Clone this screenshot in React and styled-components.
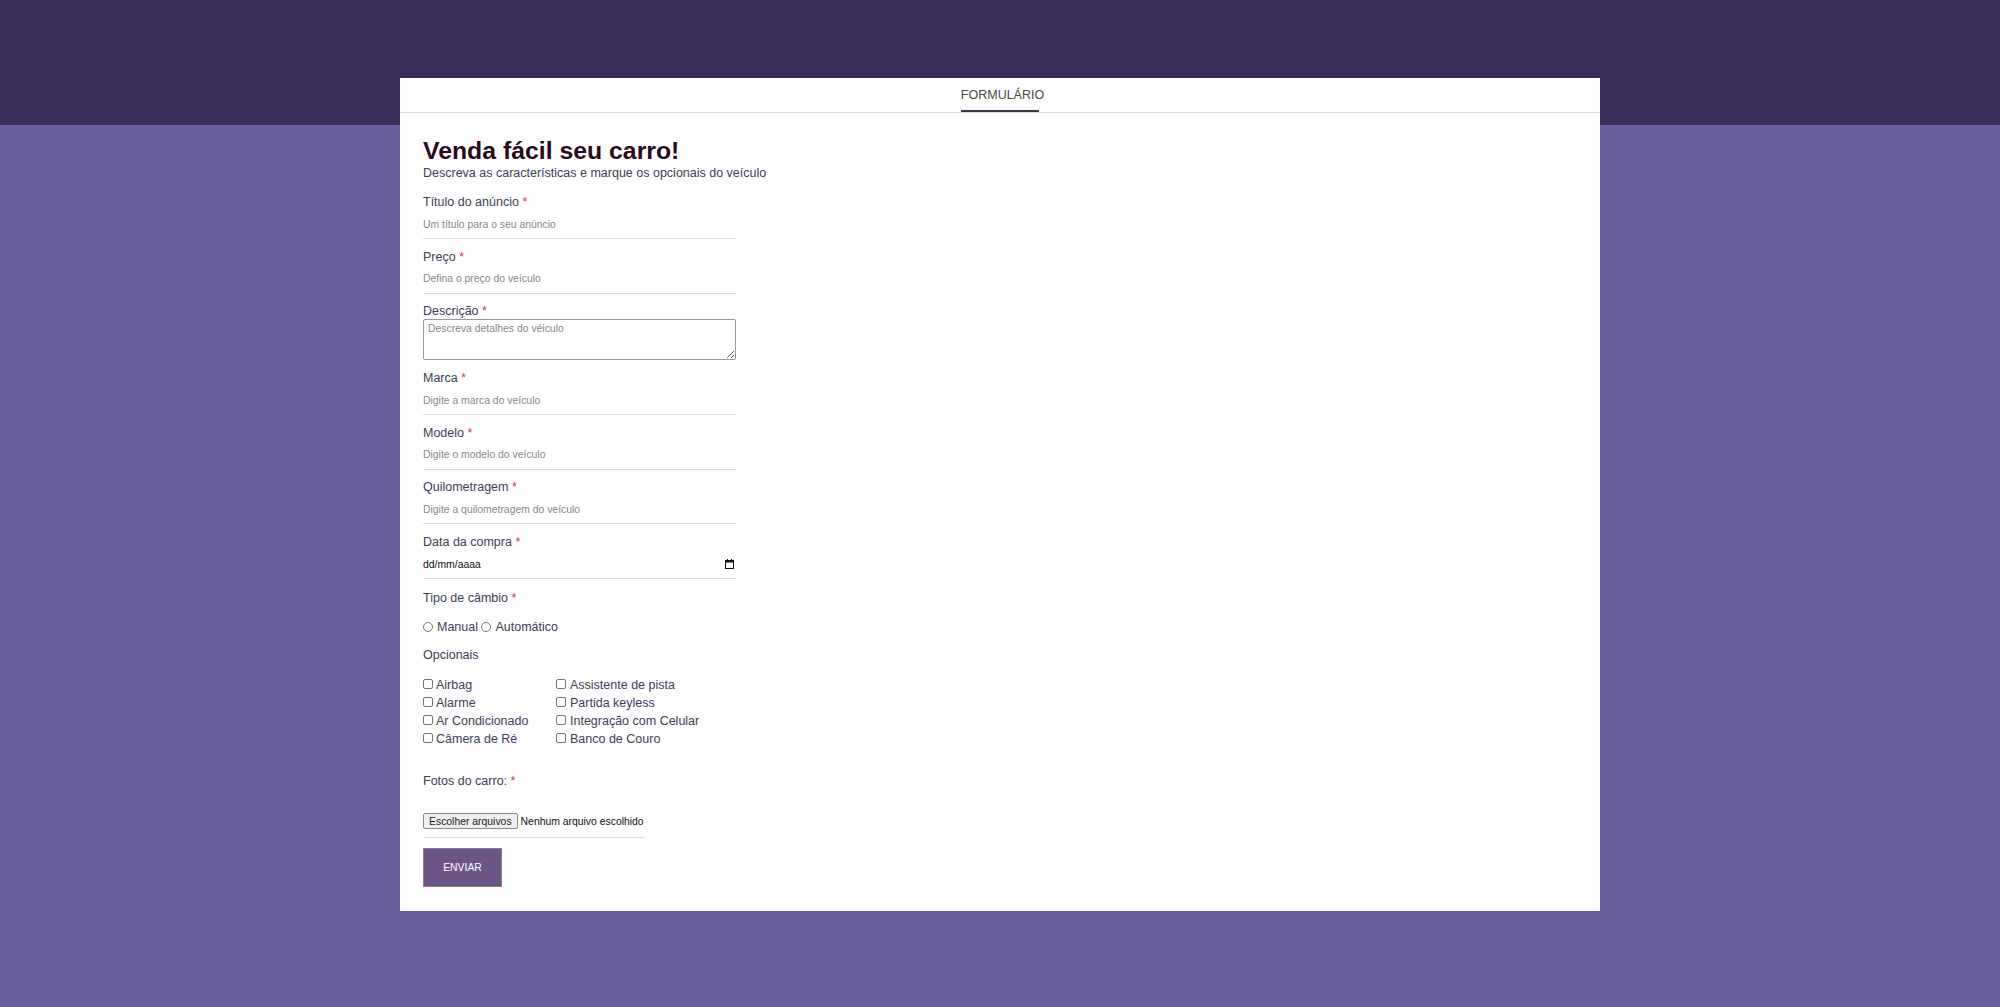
import React from 'react'
import styled, { createGlobalStyle } from 'styled-components'

const GlobalStyle = createGlobalStyle`
    body {
        margin: 0;
        background: #655e9b;
        font-family: "Liberation Sans", Arial, sans-serif;
    }
`

const Page = styled.div`
    min-height: 100vh;
    background: linear-gradient(#392c58 0, #392c58 125px, #655e9b 125px);
    padding: 78px 0 95px 0;
    box-sizing: border-box;
`
const Card = styled.div`
    width: 1200px;
    margin: 0 auto;
    background: #fdfdfd;
`
const TabBar = styled.div`
    height: 34px;
    border-bottom: 1px solid #d3d9d9;
    display: flex;
    justify-content: center;
`
const Tab = styled.div`
    position: relative;
    display: flex;
    align-items: center;
    padding-left: 5px;
    font-size: 12.5px;
    color: #4a4a4a;
`
const TabLine = styled.span`
    position: absolute;
    left: 5px;
    bottom: 0;
    width: 78px;
    height: 2px;
    background: #3a3545;
`
const Content = styled.form`
    padding: 23px 23px 24px 23px;
    color: #403e57;
`
const Heading = styled.h1`
    margin: 0;
    font-size: 24.8px;
    line-height: 30px;
    font-weight: bold;
    color: #2b0a1e;
`
const Subtitle = styled.p`
    margin: 0 0 14px 0;
    font-size: 12.5px;
    line-height: 15px;
`
const Field = styled.div`
    display: flex;
    flex-direction: column;
    width: 313px;
    margin-bottom: ${p => p.gap || 10.7}px;
`
const Label = styled.label`
    font-size: 12.5px;
    line-height: 15px;
`
const Req = styled.span`
    color: #c8374a;
`
const TextInput = styled.input`
    height: 29px;
    box-sizing: border-box;
    border: none;
    border-bottom: 1px solid #dcdcdc;
    background: #fff;
    padding: 0;
    font-family: inherit;
    font-size: 10.4px;
    outline: none;

    &::placeholder {
        color: #878787;
    }
`
const TextArea = styled.textarea`
    height: 41px;
    box-sizing: border-box;
    border: 1px solid #9a9a9a;
    border-radius: 2px;
    background: #fff;
    padding: 3px 4px;
    font-family: inherit;
    font-size: 10.4px;
    resize: vertical;
    outline: none;

    &::placeholder {
        color: #878787;
    }
`
const DateBox = styled.div`
    height: 29px;
    box-sizing: border-box;
    border-bottom: 1px solid #dcdcdc;
    background: #fff;
    display: flex;
    align-items: center;
    justify-content: space-between;
    font-size: 10.4px;
    color: #111;
    padding-right: 2px;
`
const RadioRow = styled.div`
    display: flex;
    align-items: center;
    font-size: 12.5px;
    line-height: 15px;
    margin: 14px 0 9.5px 0;
`
const Radio = styled.input`
    appearance: none;
    width: 10px;
    height: 10px;
    box-sizing: border-box;
    margin: -2px 4px 0 0;
    border: 1px solid #767676;
    border-radius: 50%;
    background: #fff;
`
const Checks = styled.div`
    display: grid;
    grid-template-columns: 133px auto;
    grid-auto-flow: column;
    grid-template-rows: repeat(4, 18.2px);
    margin: 13px 0 23px 0;
    font-size: 12.5px;
`
const Check = styled.label`
    display: flex;
    align-items: center;
`
const Box = styled.input`
    appearance: none;
    width: 10px;
    height: 10px;
    box-sizing: border-box;
    margin: -2px ${p => p.right ? 4 : 3}px 0 0;
    border: 1px solid #767676;
    border-radius: 2px;
    background: #fff;
`
const FileRow = styled.div`
    width: 222px;
    display: flex;
    align-items: center;
    padding-bottom: 8px;
    border-bottom: 1px solid #dedede;
    margin: 24px 0 10px 0;
    font-size: 10.4px;
    color: #111;
`
const FileButton = styled.span`
    height: 16px;
    box-sizing: border-box;
    display: flex;
    align-items: center;
    padding: 0 5px;
    margin-right: 3px;
    background: #efefef;
    border: 1px solid #8a8a8a;
    border-radius: 2px;
    color: #222;
`
const Submit = styled.button`
    width: 79px;
    height: 39px;
    background: #6b5585;
    border: 1px solid #8a7aa0;
    color: #fff;
    font-family: inherit;
    font-size: 10.4px;
    cursor: pointer;
`

const textFields = [
    { label: 'Título do anúncio', placeholder: 'Um título para o seu anúncio' },
    { label: 'Preço', placeholder: 'Defina o preço do veículo' },
]
const moreFields = [
    { label: 'Marca', placeholder: 'Digite a marca do veículo' },
    { label: 'Modelo', placeholder: 'Digite o modelo do veículo' },
    { label: 'Quilometragem', placeholder: 'Digite a quilometragem do veículo' },
]
const left = ['Airbag', 'Alarme', 'Ar Condicionado', 'Câmera de Ré']
const right = ['Assistente de pista', 'Partida keyless', 'Integração com Celular', 'Banco de Couro']

function TextField({ label, placeholder }) {
    return (
        <Field>
            <Label>{label} <Req>*</Req></Label>
            <TextInput placeholder={placeholder} />
        </Field>
    )
}

function CalendarIcon() {
    return (
        <svg width="9" height="10" viewBox="0 0 9 10">
            <rect x="0.5" y="1.5" width="8" height="8" fill="none" stroke="#111" />
            <rect x="0.5" y="1.5" width="8" height="2" fill="#111" />
            <rect x="2" y="0" width="1" height="2" fill="#111" />
            <rect x="6" y="0" width="1" height="2" fill="#111" />
        </svg>
    )
}

function App() {
    return (
        <Page>
            <GlobalStyle />
            <Card>
                <TabBar>
                    <Tab>FORMULÁRIO<TabLine /></Tab>
                </TabBar>
                <Content onSubmit={e => e.preventDefault()}>
                    <Heading>Venda fácil seu carro!</Heading>
                    <Subtitle>Descreva as características e marque os opcionais do veículo</Subtitle>

                    {textFields.map(f => <TextField key={f.label} {...f} />)}

                    <Field>
                        <Label>Descrição <Req>*</Req></Label>
                        <TextArea placeholder="Descreva detalhes do véiculo" />
                    </Field>

                    {moreFields.map(f => <TextField key={f.label} {...f} />)}

                    <Field gap={9}>
                        <Label>Data da compra <Req>*</Req></Label>
                        <DateBox>
                            <span>dd/mm/aaaa</span>
                            <CalendarIcon />
                        </DateBox>
                    </Field>

                    <Label>Tipo de câmbio <Req>*</Req></Label>
                    <RadioRow>
                        <Radio type="radio" name="cambio" />Manual&nbsp;
                        <Radio type="radio" name="cambio" />Automático
                    </RadioRow>

                    <Label>Opcionais</Label>
                    <Checks>
                        {left.map(o => <Check key={o}><Box type="checkbox" />{o}</Check>)}
                        {right.map(o => <Check key={o}><Box type="checkbox" right />{o}</Check>)}
                    </Checks>

                    <Label>Fotos do carro: <Req>*</Req></Label>
                    <FileRow>
                        <FileButton>Escolher arquivos</FileButton>
                        Nenhum arquivo escolhido
                    </FileRow>

                    <Submit type="submit">ENVIAR</Submit>
                </Content>
            </Card>
        </Page>
    )
}

export default App
